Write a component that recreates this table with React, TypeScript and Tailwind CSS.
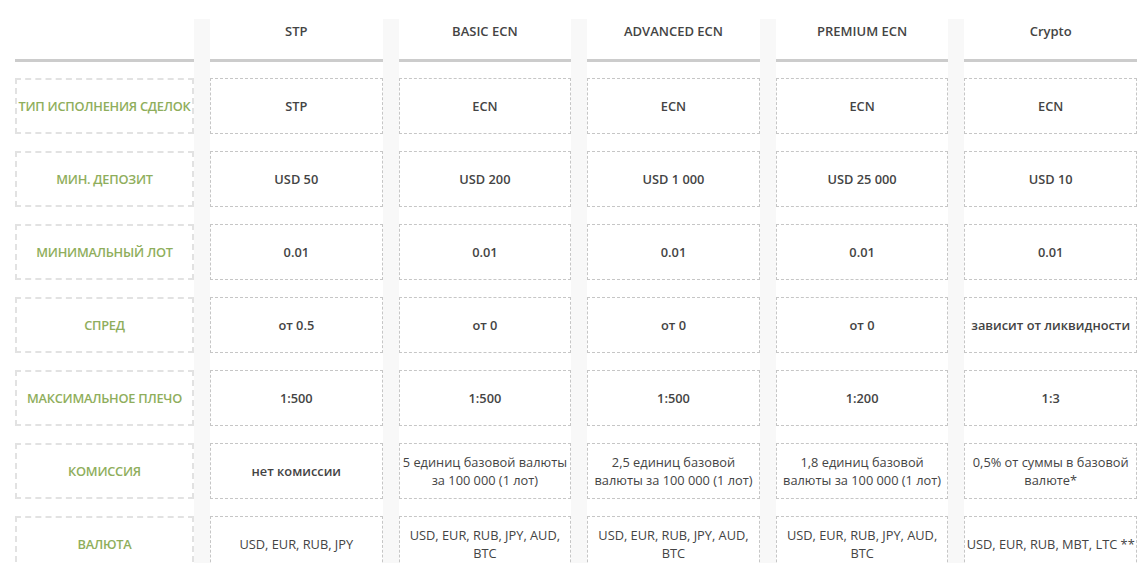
import React from 'react';

// Строки таблицы (подписи слева)
const labels = [
  'ТИП ИСПОЛНЕНИЯ СДЕЛОК',
  'МИН. ДЕПОЗИТ',
  'МИНИМАЛЬНЫЙ ЛОТ',
  'СПРЕД',
  'МАКСИМАЛЬНОЕ ПЛЕЧО',
  'КОМИССИЯ',
  'ВАЛЮТА',
];

type Cell = { text: string; bold?: boolean };

type Account = { name: string; cells: Cell[] };

const accounts: Account[] = [
  {
    name: 'STP',
    cells: [
      { text: 'STP', bold: true },
      { text: 'USD 50', bold: true },
      { text: '0.01', bold: true },
      { text: 'от 0.5', bold: true },
      { text: '1:500', bold: true },
      { text: 'нет комиссии', bold: true },
      { text: 'USD, EUR, RUB, JPY' },
    ],
  },
  {
    name: 'BASIC ECN',
    cells: [
      { text: 'ECN', bold: true },
      { text: 'USD 200', bold: true },
      { text: '0.01', bold: true },
      { text: 'от 0', bold: true },
      { text: '1:500', bold: true },
      { text: '5 единиц базовой валюты за 100 000 (1 лот)' },
      { text: 'USD, EUR, RUB, JPY, AUD, BTC' },
    ],
  },
  {
    name: 'ADVANCED ECN',
    cells: [
      { text: 'ECN', bold: true },
      { text: 'USD 1 000', bold: true },
      { text: '0.01', bold: true },
      { text: 'от 0', bold: true },
      { text: '1:500', bold: true },
      { text: '2,5 единиц базовой валюты за 100 000 (1 лот)' },
      { text: 'USD, EUR, RUB, JPY, AUD, BTC' },
    ],
  },
  {
    name: 'PREMIUM ECN',
    cells: [
      { text: 'ECN', bold: true },
      { text: 'USD 25 000', bold: true },
      { text: '0.01', bold: true },
      { text: 'от 0', bold: true },
      { text: '1:200', bold: true },
      { text: '1,8 единиц базовой валюты за 100 000 (1 лот)' },
      { text: 'USD, EUR, RUB, JPY, AUD, BTC' },
    ],
  },
  {
    name: 'Crypto',
    cells: [
      { text: 'ECN', bold: true },
      { text: 'USD 10', bold: true },
      { text: '0.01', bold: true },
      { text: 'зависит от ликвидности', bold: true },
      { text: '1:3', bold: true },
      { text: '0,5% от суммы в базовой валюте*' },
      { text: 'USD, EUR, RUB, MBT, LTC **' },
    ],
  },
];

const Header: React.FC<{ title?: string }> = ({ title }) => (
  <div className="h-[43px] shrink-0 border-b-[3px] border-[#cccccc] bg-white pt-[3px] text-center text-[13px] leading-[18px] font-semibold text-[#444444]">
    {title}
  </div>
);

const App: React.FC = () => {
  return (
    <div
      className="h-[583px] w-[1143px] overflow-hidden bg-white"
      style={{ fontFamily: '"Open Sans", "Noto Sans", sans-serif' }}
    >
      <div className="h-[563px] overflow-hidden pt-[19px]">
        <div className="ml-[15px] flex h-full w-[1122px] gap-x-[16px] bg-[#f8f8f8]">
          {/* Колонка подписей */}
          <div className="flex w-[179px] shrink-0 flex-col bg-white">
            <Header />
            <div className="flex flex-col gap-[17px] pt-[16px]">
              {labels.map((label) => (
                <div
                  key={label}
                  className="flex h-[56px] shrink-0 items-center justify-center border-2 border-dashed border-[#e2e2e2] text-center text-[12.8px] leading-[18px] font-semibold tracking-[-0.25px] whitespace-nowrap text-[#8fae5c]"
                >
                  {label}
                </div>
              ))}
            </div>
          </div>

          {/* Колонки счетов */}
          {accounts.map((acc) => (
            <div key={acc.name} className="flex min-w-0 flex-1 flex-col bg-white">
              <Header title={acc.name} />
              <div className="flex flex-col gap-[17px] pt-[16px]">
                {acc.cells.map((cell, i) => (
                  <div
                    key={i}
                    className={`flex h-[56px] shrink-0 items-center justify-center border border-dashed border-[#c6c6c6] text-center text-[12.8px] leading-[18px] text-[#444444] ${
                      cell.bold ? 'font-semibold' : 'font-normal'
                    }`}
                  >
                    {cell.text}
                  </div>
                ))}
              </div>
            </div>
          ))}
        </div>
      </div>
    </div>
  );
};

export default App;
